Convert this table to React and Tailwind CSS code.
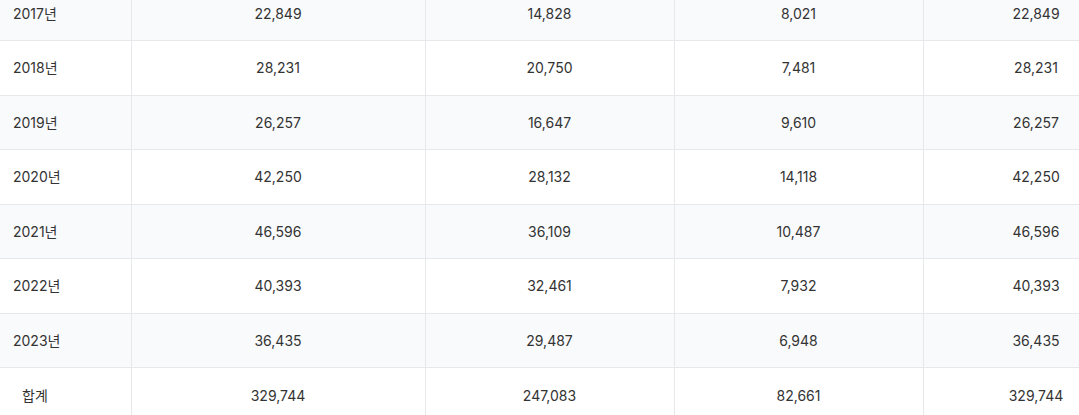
const rows = [
  ['2017년', '22,849', '14,828', '8,021', '22,849'],
  ['2018년', '28,231', '20,750', '7,481', '28,231'],
  ['2019년', '26,257', '16,647', '9,610', '26,257'],
  ['2020년', '42,250', '28,132', '14,118', '42,250'],
  ['2021년', '46,596', '36,109', '10,487', '46,596'],
  ['2022년', '40,393', '32,461', '7,932', '40,393'],
  ['2023년', '36,435', '29,487', '6,948', '36,435'],
];

const total = ['합계', '329,744', '247,083', '82,661', '329,744'];

export default function App() {
  return (
    <div
      className="w-full h-[415px] overflow-hidden bg-white text-[14px] text-[#333]"
      style={{ fontFamily: 'Inter, "Noto Sans CJK KR", sans-serif' }}
    >
      <table className="-mt-[14px] w-[1149px] table-fixed border-collapse">
        <colgroup>
          <col className="w-[131px]" />
          <col className="w-[294px]" />
          <col className="w-[249px]" />
          <col className="w-[249px]" />
          <col className="w-[226px]" />
        </colgroup>
        <tbody>
          {rows.map((r, i) => (
            <tr
              key={r[0]}
              className={`h-[54.5px] border-b border-[#e6e8ec] ${i % 2 === 0 ? 'bg-[#f9fafc]' : 'bg-white'}`}
            >
              <td className="border-r border-[#e6e8ec] pl-[13px] text-left">{r[0]}</td>
              {r.slice(1).map((v, j) => (
                <td key={j} className="border-r border-[#e6e8ec] text-center">
                  {v}
                </td>
              ))}
            </tr>
          ))}
          <tr className="h-[54.5px] bg-white">
            <td className="border-r border-[#e6e8ec] pl-[22px] text-left">{total[0]}</td>
            {total.slice(1).map((v, j) => (
              <td key={j} className="border-r border-[#e6e8ec] text-center">
                {v}
              </td>
            ))}
          </tr>
        </tbody>
      </table>
    </div>
  );
}
